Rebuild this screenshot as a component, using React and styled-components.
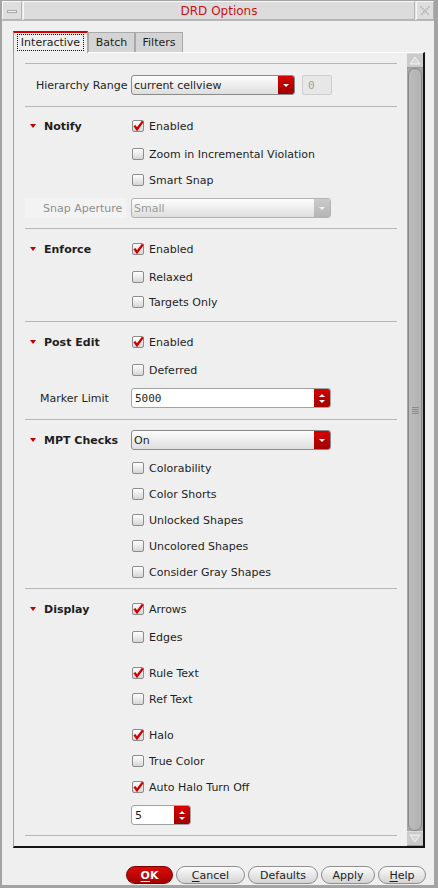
import React from 'react';
import styled, { createGlobalStyle } from 'styled-components';

const GlobalStyle = createGlobalStyle`
  html, body {
    margin: 0;
    padding: 0;
    background: #efefef;
  }
  body {
    font-family: "DejaVu Sans", Verdana, sans-serif;
    font-size: 11px;
    color: #1e1e1e;
  }
  * {
    box-sizing: border-box;
  }
`;

const Window = styled.div`
  width: 438px;
  height: 888px;
  display: flex;
  flex-direction: column;
  background: #efefef;
  border: 2px solid #a3a3a3;
  border-top-width: 1px;
  border-right-width: 4px;
  border-bottom-width: 3px;
`;

const TitleBar = styled.div`
  height: 20px;
  display: flex;
  gap: 1px;
  border-bottom: 1px solid #b9b9b9;
  background: #e9e9e9;
`;

const TitleButton = styled.div`
  width: ${p => p.$w}px;
  display: flex;
  align-items: center;
  justify-content: center;
  background: #dedede;
  border-top: 1px solid #f7f7f7;
  border-left: 1px solid #f7f7f7;
  border-right: 1px solid #b3b3b3;
  border-bottom: 1px solid #b3b3b3;
`;

const MinBar = styled.span`
  width: 10px;
  height: 3px;
  background: #f4f4f4;
  border: 1px solid #a9a9a9;
  margin-top: 2px;
`;

const TitleText = styled.div`
  flex: 1;
  display: flex;
  align-items: center;
  justify-content: center;
  font-size: 12px;
  color: #cc1010;
  background: #dcdcdc;
  border-top: 1px solid #f7f7f7;
  border-left: 1px solid #f7f7f7;
  border-right: 1px solid #b3b3b3;
  border-bottom: 1px solid #b3b3b3;
`;

const TabBar = styled.div`
  margin: 10px 0 0 11px;
  height: 21px;
  display: flex;
  align-items: flex-end;
`;

const Tab = styled.div`
  width: ${p => p.$w}px;
  height: ${p => (p.$active ? 22 : 20)}px;
  margin-bottom: ${p => (p.$active ? -1 : 0)}px;
  position: relative;
  z-index: ${p => (p.$active ? 2 : 1)};
  display: flex;
  align-items: center;
  justify-content: center;
  padding: ${p => (p.$active ? '1px 3px 2px' : '0 0 1px')};
  background: ${p => (p.$active ? '#efefef' : '#d4d4d4')};
  border: 1px solid #a9a9a9;
  border-top: ${p => (p.$active ? '2px solid #d40000' : '1px solid #a9a9a9')};
  border-bottom: none;
  border-left-color: ${p => (p.$active ? '#9a9a9a' : '#a9a9a9')};
  color: #1e1e1e;
`;

const FocusRing = styled.span`
  flex: 1;
  align-self: stretch;
  display: flex;
  align-items: center;
  justify-content: center;
  border: 1px dotted #111;
`;

const Panel = styled.div`
  margin-left: 11px;
  width: 412px;
  height: 796px;
  display: flex;
  border-top: 1px solid #fdfdfd;
  border-left: 1px solid #a2a2a2;
  border-right: 2px solid #141414;
  border-bottom: 2px solid #141414;
`;

const Content = styled.div`
  flex: 1;
  display: flex;
  flex-direction: column;
  padding: 0 10px 0 11px;
`;

const Separator = styled.div`
  height: 1px;
  flex: none;
  margin-top: ${p => p.$mt}px;
  background: #b6b6b6;
`;

const Row = styled.div`
  height: 20px;
  flex: none;
  margin-top: ${p => p.$mt}px;
  display: grid;
  grid-template-columns: 106px 1fr;
  align-items: center;
`;

const Field = styled.div`
  grid-column: 2;
  display: flex;
  align-items: center;
`;

const Label = styled.div`
  height: 20px;
  display: flex;
  align-items: center;
  padding-left: ${p => p.$indent}px;
  color: ${p => (p.$muted ? '#8f8f8f' : '#1e1e1e')};
  background: ${p => (p.$muted ? '#f3f3f3' : 'transparent')};
  margin-right: ${p => (p.$muted ? 5 : 0)}px;
`;

const Head = styled.div`
  display: flex;
  align-items: center;
  padding-left: 5px;
  font-weight: bold;
`;

const Triangle = styled.span`
  width: 0;
  height: 0;
  margin-right: 8px;
  border-left: 3px solid transparent;
  border-right: 3px solid transparent;
  border-top: 4px solid #c40000;
`;

const CheckLabel = styled.label`
  display: flex;
  align-items: center;
  gap: 5px;
  margin-left: 1px;
`;

const Box = styled.span`
  width: 12px;
  height: 12px;
  position: relative;
  border: 1px solid #8c8c8c;
  border-radius: 2px;
  background: linear-gradient(#ffffff, #d6d6d6);
  svg {
    position: absolute;
    left: -1px;
    top: -1px;
    overflow: visible;
  }
`;

const Combo = styled.div`
  width: ${p => p.$w}px;
  height: 20px;
  display: flex;
  align-items: center;
  border: 1px solid ${p => (p.$disabled ? '#b3b3b3' : '#8a8a8a')};
  border-radius: 3px;
  background: linear-gradient(#fdfdfd, #dedede);
  color: ${p => (p.$disabled ? '#9a9a9a' : '#1e1e1e')};
  overflow: hidden;
`;

const ComboText = styled.span`
  flex: 1;
  padding-left: 2px;
`;

const RedButton = styled.span`
  width: 16px;
  align-self: stretch;
  display: flex;
  flex-direction: column;
  align-items: center;
  justify-content: center;
  gap: 3px;
  background: ${p => (p.$disabled
    ? 'linear-gradient(#cbcbcb, #b4b4b4)'
    : 'linear-gradient(#d80000, #9e0000)')};
`;

const Arrow = styled.span`
  width: 0;
  height: 0;
  border-left: 3px solid transparent;
  border-right: 3px solid transparent;
  border-top: ${p => (p.$up ? 'none' : `3px solid ${p.$color || '#fff'}`)};
  border-bottom: ${p => (p.$up ? `3px solid ${p.$color || '#fff'}` : 'none')};
`;

const DisabledNum = styled.div`
  width: 30px;
  height: 20px;
  margin-left: 7px;
  display: flex;
  align-items: center;
  padding-left: 5px;
  font-family: "DejaVu Sans Mono", monospace;
  color: #a2a2a2;
  background: #e7e7e7;
  border: 1px solid #cdcdcd;
  border-radius: 2px;
`;

const Spin = styled.div`
  width: ${p => p.$w}px;
  height: 20px;
  display: flex;
  align-items: center;
  background: #fff;
  border: 1px solid #a3a3a3;
  border-radius: 3px;
  overflow: hidden;
  font-family: ${p => (p.$mono ? '"DejaVu Sans Mono", monospace' : '"DejaVu Sans", sans-serif')};
`;

const SpinText = styled.span`
  flex: 1;
  padding-left: 3px;
`;

const ScrollBar = styled.div`
  width: 16px;
  display: flex;
  flex-direction: column;
  background: #a6a6a6;
`;

const ScrollArrow = styled.div`
  height: 15px;
  flex: none;
  display: flex;
  align-items: center;
  justify-content: center;
  background: #cbcbcb;
  border-top: 1px solid #dadada;
  border-bottom: 1px solid #9d9d9d;
`;

const Thumb = styled.div`
  flex: 1;
  margin: 0 1px;
  display: flex;
  flex-direction: column;
  align-items: center;
  padding-top: 338px;
  background: linear-gradient(90deg, #bcbcbc, #b2b2b2);
  border: 1px solid #878787;
  border-radius: 7px;
`;

const Grip = styled.span`
  width: 7px;
  height: 1px;
  margin-bottom: 1px;
  background: #8a8a8a;
`;

const Footer = styled.div`
  margin-top: 18px;
  padding-right: 8px;
  display: flex;
  justify-content: flex-end;
  gap: 3px;
`;

const Button = styled.button`
  width: ${p => p.$w}px;
  height: 18px;
  padding: 0;
  border-radius: 9px;
  border: 1px solid ${p => (p.$primary ? '#7a0000' : '#8e8e8e')};
  background: ${p => (p.$primary
    ? 'linear-gradient(#de0a0a, #a40000)'
    : 'linear-gradient(#fbfbfb, #d3d3d3)')};
  color: ${p => (p.$primary ? '#fff' : '#1e1e1e')};
  font-family: "DejaVu Sans", Verdana, sans-serif;
  font-size: 11px;
  font-weight: ${p => (p.$primary ? 'bold' : 'normal')};
  u {
    text-decoration: underline;
    text-underline-offset: 2px;
  }
`;

function Check({ checked, children }) {
  return (
    <CheckLabel>
      <Box>
        {checked && (
          <svg width="12" height="12" viewBox="0 0 12 12">
            <path d="M2.4 5.6 L5 9.2 L10.8 1.4" fill="none" stroke="#d00000" strokeWidth="2.4" />
          </svg>
        )}
      </Box>
      {children}
    </CheckLabel>
  );
}

function Section({ title }) {
  return (
    <Head>
      <Triangle />
      {title}
    </Head>
  );
}

function Dropdown({ value, width, disabled }) {
  return (
    <Combo $w={width} $disabled={disabled}>
      <ComboText>{value}</ComboText>
      <RedButton $disabled={disabled}>
        <Arrow $color={disabled ? '#f2f2f2' : '#fff'} />
      </RedButton>
    </Combo>
  );
}

function SpinBox({ value, width, mono }) {
  return (
    <Spin $w={width} $mono={mono}>
      <SpinText>{value}</SpinText>
      <RedButton>
        <Arrow $up />
        <Arrow />
      </RedButton>
    </Spin>
  );
}

const CheckRow = ({ mt, checked, children }) => (
  <Row $mt={mt}>
    <Field>
      <Check checked={checked}>{children}</Check>
    </Field>
  </Row>
);

export default function App() {
  return (
    <>
      <GlobalStyle />
      <Window>
        <TitleBar>
          <TitleButton $w={20}>
            <MinBar />
          </TitleButton>
          <TitleText>DRD Options</TitleText>
          <TitleButton $w={18}>
            <svg width="12" height="12" viewBox="0 0 12 12">
              <path d="M1.5 1.5 L10.5 10.5 M10.5 1.5 L1.5 10.5" stroke="#b8b8b8" strokeWidth="2" strokeDasharray="1.5 1" fill="none" />
            </svg>
          </TitleButton>
        </TitleBar>

        <TabBar>
          <Tab $w={75} $active>
            <FocusRing>Interactive</FocusRing>
          </Tab>
          <Tab $w={47}>Batch</Tab>
          <Tab $w={48}>Filters</Tab>
        </TabBar>

        <Panel>
          <Content>
            <Separator $mt={10} />
            <Row $mt={11}>
              <Label $indent={11}>Hierarchy Range</Label>
              <Field>
                <Dropdown value="current cellview" width={164} />
                <DisabledNum>0</DisabledNum>
              </Field>
            </Row>

            <Separator $mt={11} />
            <Row $mt={9}>
              <Section title="Notify" />
              <Field><Check checked>Enabled</Check></Field>
            </Row>
            <CheckRow mt={8}>Zoom in Incremental Violation</CheckRow>
            <CheckRow mt={6}>Smart Snap</CheckRow>
            <Row $mt={8}>
              <Label $indent={18} $muted>Snap Aperture</Label>
              <Field>
                <Dropdown value="Small" width={200} disabled />
              </Field>
            </Row>

            <Separator $mt={10} />
            <Row $mt={10}>
              <Section title="Enforce" />
              <Field><Check checked>Enabled</Check></Field>
            </Row>
            <CheckRow mt={8}>Relaxed</CheckRow>
            <CheckRow mt={5}>Targets Only</CheckRow>

            <Separator $mt={9} />
            <Row $mt={10}>
              <Section title="Post Edit" />
              <Field><Check checked>Enabled</Check></Field>
            </Row>
            <CheckRow mt={8}>Deferred</CheckRow>
            <Row $mt={8}>
              <Label $indent={15}>Marker Limit</Label>
              <Field>
                <SpinBox value="5000" width={200} mono />
              </Field>
            </Row>

            <Separator $mt={11} />
            <Row $mt={10}>
              <Section title="MPT Checks" />
              <Field>
                <Dropdown value="On" width={200} />
              </Field>
            </Row>
            <CheckRow mt={8}>Colorability</CheckRow>
            <CheckRow mt={6}>Color Shorts</CheckRow>
            <CheckRow mt={6}>Unlocked Shapes</CheckRow>
            <CheckRow mt={6}>Uncolored Shapes</CheckRow>
            <CheckRow mt={6}>Consider Gray Shapes</CheckRow>

            <Separator $mt={6} />
            <Row $mt={10}>
              <Section title="Display" />
              <Field><Check checked>Arrows</Check></Field>
            </Row>
            <CheckRow mt={8}>Edges</CheckRow>
            <CheckRow mt={16} checked>Rule Text</CheckRow>
            <CheckRow mt={6}>Ref Text</CheckRow>
            <CheckRow mt={16} checked>Halo</CheckRow>
            <CheckRow mt={6}>True Color</CheckRow>
            <CheckRow mt={6} checked>Auto Halo Turn Off</CheckRow>
            <Row $mt={8}>
              <Field>
                <SpinBox value="5" width={60} />
              </Field>
            </Row>
            <Separator $mt={10} />
          </Content>

          <ScrollBar>
            <ScrollArrow>
              <svg width="12" height="9" viewBox="0 0 12 9">
                <path d="M1 8 L6 1 L11 8 Z" fill="#d6d6d6" stroke="#f4f4f4" strokeWidth="1" />
              </svg>
            </ScrollArrow>
            <Thumb>
              <Grip />
              <Grip />
              <Grip />
              <Grip />
            </Thumb>
            <ScrollArrow>
              <svg width="12" height="9" viewBox="0 0 12 9">
                <path d="M1 1 L6 8 L11 1 Z" fill="#d6d6d6" stroke="#f4f4f4" strokeWidth="1" />
              </svg>
            </ScrollArrow>
          </ScrollBar>
        </Panel>

        <Footer>
          <Button $w={47} $primary><u>O</u>K</Button>
          <Button $w={69}><u>C</u>ancel</Button>
          <Button $w={70}>Defaults</Button>
          <Button $w={54}>Apply</Button>
          <Button $w={48}><u>H</u>elp</Button>
        </Footer>
      </Window>
    </>
  );
}
